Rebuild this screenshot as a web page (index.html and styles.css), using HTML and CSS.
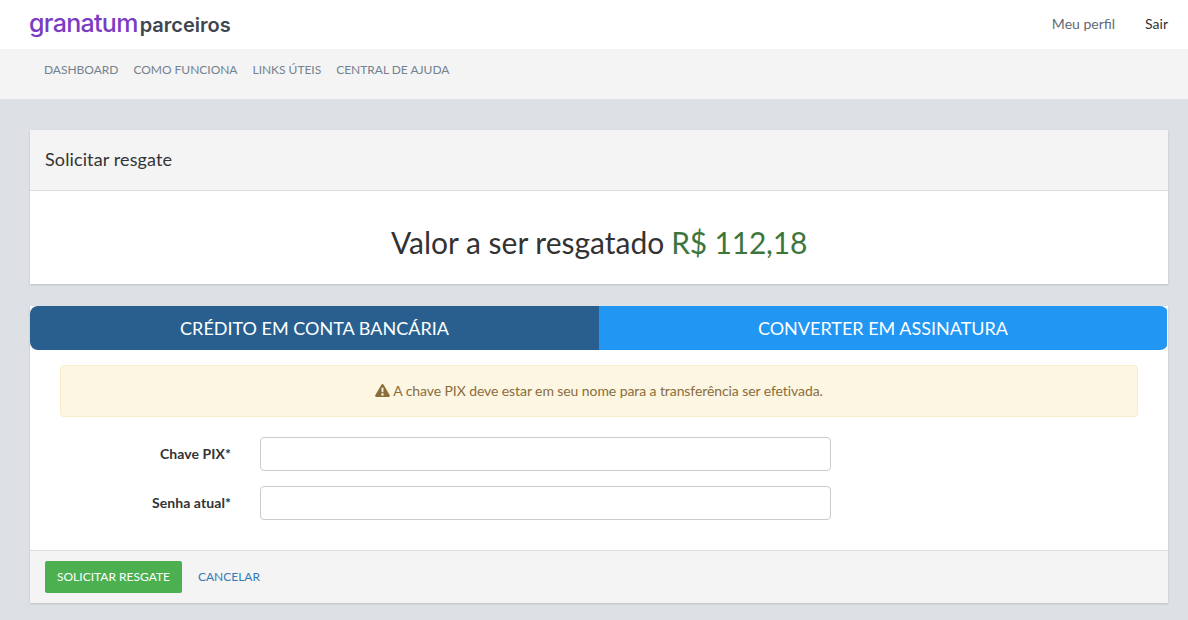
FILE: index.html
```html
<!DOCTYPE html>
<html lang="pt-BR">
<head>
<meta charset="utf-8">
<title>Solicitar resgate</title>
<link rel="stylesheet" href="styles.css">
</head>
<body>
<header class="topbar">
  <a class="logo" href="#"><span class="logo-main">granatum</span><span class="logo-sub">parceiros</span></a>
  <nav class="user-nav">
    <a class="user-link" href="#">Meu perfil</a>
    <a class="user-link user-exit" href="#">Sair</a>
  </nav>
</header>
<nav class="subnav">
  <a href="#">DASHBOARD</a>
  <a href="#">COMO FUNCIONA</a>
  <a href="#">LINKS ÚTEIS</a>
  <a href="#">CENTRAL DE AJUDA</a>
</nav>
<main class="content">
  <section class="card summary">
    <h2 class="card-title">Solicitar resgate</h2>
    <p class="amount">Valor a ser resgatado <span class="amount-value">R$ 112,18</span></p>
  </section>
  <section class="card form-card">
    <div class="tabs">
      <a class="tab tab-active" href="#">CRÉDITO EM CONTA BANCÁRIA</a>
      <a class="tab tab-other" href="#">CONVERTER EM ASSINATURA</a>
    </div>
    <div class="form-body">
      <div class="alert">
        <svg class="alert-icon" viewBox="0 0 16 14" width="15" height="13" aria-hidden="true"><path fill-rule="evenodd" d="M8 0c.5 0 .9.3 1.2.7l6.6 11.4c.5.9-.1 1.900-1.200 1.900H1.400C.3 14-.3 13 .2 12.100L6.800.7C7.100.3 7.500 0 8 0zM6.900 4l.2 5h1.800l.2-5H6.900zM8 10a1.300 1.300 0 1 0 0 2.600A1.300 1.300 0 0 0 8 10z"/></svg>
        <span class="alert-text">A chave PIX deve estar em seu nome para a transferência ser efetivada.</span>
      </div>
      <div class="field">
        <label class="field-label" for="pix">Chave PIX*</label>
        <input class="field-input" id="pix" type="text">
      </div>
      <div class="field">
        <label class="field-label" for="senha">Senha atual*</label>
        <input class="field-input" id="senha" type="password">
      </div>
    </div>
    <footer class="actions">
      <button class="btn-submit" type="button">SOLICITAR RESGATE</button>
      <a class="btn-cancel" href="#">CANCELAR</a>
    </footer>
  </section>
</main>
</body>
</html>
```
FILE: styles.css
```css
* { box-sizing: border-box; }
html, body { margin: 0; height: 100%; }
body {
  background: #dde1e5;
  font-family: Lato, "Liberation Sans", sans-serif;
  font-size: 14px;
  color: #333;
  overflow: hidden;
}
a { text-decoration: none; }
.topbar {
  height: 49px;
  background: #fff;
  display: flex;
  align-items: center;
  justify-content: space-between;
  padding: 0 20px 0 29px;
}
.logo { display: flex; align-items: baseline; line-height: 1; gap: 2px; margin-bottom: 3px; }
.logo-main { font-family: Inter, sans-serif; font-size: 25px; font-weight: 500; color: #7b3cc4; letter-spacing: -0.7px; }
.logo-sub { font-family: Inter, sans-serif; font-size: 20px; font-weight: 600; color: #3d4650; }
.user-nav { display: flex; gap: 30px; margin-bottom: 2px; }
.user-link { color: #5f6b73; font-size: 14px; }
.user-exit { color: #333; }
.subnav {
  height: 50px;
  background: #f4f4f4;
  display: flex;
  gap: 15px;
  padding: 14px 44px 0;
  align-items: flex-start;
}
.subnav a { color: #73828f; font-size: 12px; line-height: 14px; letter-spacing: -0.02px; }
.content {
  padding: 31px 20px 0 30px;
  display: flex;
  flex-direction: column;
  gap: 22px;
}
.card { background: #fff; box-shadow: 0 1px 2px rgba(0,0,0,.15); }
.summary { height: 154px; }
.card-title {
  margin: 0;
  height: 61px;
  padding: 0 15px 2px;
  display: flex;
  align-items: center;
  background: #f4f4f4;
  border-bottom: 1px solid #dddddd;
  font-size: 18px;
  font-weight: 400;
  letter-spacing: 0.12px;
  color: #333;
}
.amount {
  margin: 0;
  height: 93px;
  padding-top: 8px;
  display: flex;
  align-items: center;
  justify-content: center;
  gap: 7px;
  font-size: 30px;
  color: #333;
}
.amount-value { color: #3c763d; letter-spacing: -0.2px; }
.tabs { display: grid; grid-template-columns: 569px 568px; height: 44px; border-radius: 8px; overflow: hidden; }
.tab { display: flex; align-items: center; justify-content: center; color: #fff; font-size: 18px; }
.tab-active { background: #285f8f; }
.tab-other { background: #2196f3; }
.form-body { padding: 15px 30px 15px; }
.alert {
  height: 52px;
  padding-bottom: 2px;
  background: #fdf6e3;
  border: 1px solid #faebcc;
  border-radius: 4px;
  color: #8a6d3b;
  display: flex;
  align-items: center;
  justify-content: center;
  gap: 3px;
  margin-bottom: 20px;
}
.alert-text { letter-spacing: -0.085px; }
.alert-icon { fill: #8a6d3b; }
.field { display: flex; align-items: center; height: 34px; margin-bottom: 15px; }
.field-label { width: 171px; padding-bottom: 2px; text-align: right; font-weight: 700; letter-spacing: 0.08px; color: #333; margin-right: 29px; }
.field-input { width: 571px; height: 34px; border: 1px solid #ccc; border-radius: 4px; background: #fff; }
.actions {
  height: 53px;
  background: #f4f4f4;
  border-top: 1px solid #dddddd;
  display: flex;
  align-items: center;
  padding: 0 15px;
  gap: 16px;
}
.btn-submit {
  height: 32px;
  padding: 0 12px 2px;
  background: #4caf50;
  color: #fff;
  border: 0;
  border-radius: 2px;
  font-family: inherit;
  font-size: 12px;
  font-weight: 400;
}
.btn-cancel { color: #337ab7; font-size: 12px; padding-bottom: 2px; }
```
